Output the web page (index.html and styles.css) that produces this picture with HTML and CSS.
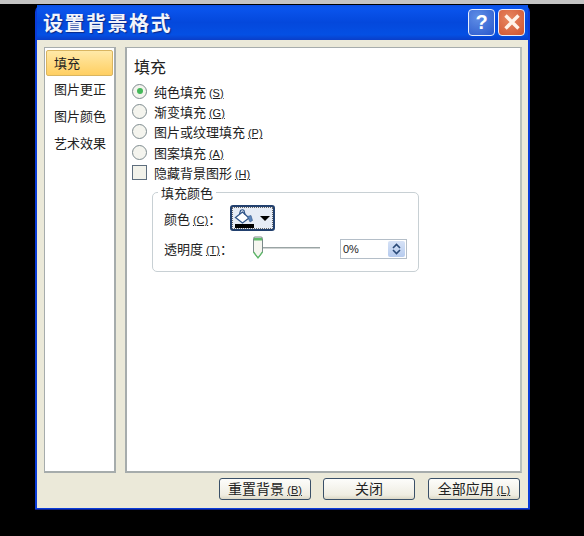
FILE: index.html
```html
<!DOCTYPE html>
<html lang="zh">
<head>
<meta charset="utf-8">
<title>设置背景格式</title>
<link rel="stylesheet" href="styles.css">
</head>
<body>
<div class="topstrip"></div>
<div class="dialog">
  <div class="titlebar">
    <span class="title">设置背景格式</span>
    <div class="winbtns">
      <span class="winbtn help">?</span>
      <span class="winbtn close">
        <svg width="20" height="20" viewBox="0 0 20 20"><path d="M3.500 3.500L16.500 16.500M16.500 3.500L3.500 16.500" stroke="#fff3ea" stroke-width="3.400" fill="none"/></svg>
      </span>
    </div>
  </div>
  <div class="client">
    <div class="panes">
      <ul class="nav">
        <li class="nav-item active">填充</li>
        <li class="nav-item">图片更正</li>
        <li class="nav-item">图片颜色</li>
        <li class="nav-item">艺术效果</li>
      </ul>
      <div class="content">
        <h1 class="heading">填充</h1>
        <div class="option"><span class="radio checked"></span><span>纯色填充 <u>(S)</u></span></div>
        <div class="option"><span class="radio"></span><span>渐变填充 <u>(G)</u></span></div>
        <div class="option"><span class="radio"></span><span>图片或纹理填充 <u>(P)</u></span></div>
        <div class="option"><span class="radio"></span><span>图案填充 <u>(A)</u></span></div>
        <div class="option"><span class="check"></span><span>隐藏背景图形 <u>(H)</u></span></div>
        <fieldset class="group">
          <legend class="legend">填充颜色</legend>
          <div class="field color-field">
            <span class="field-label">颜色 <u>(C)</u>：</span>
            <span class="colorbtn">
              <span class="swatch">
                <svg width="22" height="15" viewBox="0 0 22 15"><path d="M1.500 8.500L8.500 3L15 9L8.500 14Z" fill="#fff" stroke="#2f5488" stroke-width="1.300"/><path d="M5.500 5L6.500 1.500Q8.500 0 10 1.500L11 5.500" fill="none" stroke="#2f5488" stroke-width="1.200"/><path d="M13.500 7.500L17 6.500L18.500 11.500L16 13Z" fill="#5c86bd" stroke="#2f5488" stroke-width=".6"/></svg>
                <span class="swatch-bar"></span>
              </span>
              <span class="caret"></span>
            </span>
          </div>
          <div class="field trans-field">
            <span class="field-label">透明度 <u>(T)</u>：</span>
            <span class="slider">
              <span class="track"></span>
              <svg class="thumb" width="12" height="24" viewBox="0 0 12 24"><path d="M1.500 2.500Q1.500 1 3 1H9Q10.500 1 10.500 2.500V16L6 22L1.500 16Z" fill="#f6f6f0" stroke="#7b8a8a"/><path d="M2 2H10V4.500H2Z" fill="#5fba6a"/><path d="M1.500 16L6 22L10.500 16" fill="none" stroke="#5fba6a" stroke-width="1.300"/></svg>
            </span>
            <span class="spin">
              <span class="spin-value">0%</span>
              <span class="spin-btns">
                <svg width="13" height="16" viewBox="0 0 13 16"><path d="M3 7L6.500 3.500L10 7M3 9L6.500 12.500L10 9" fill="none" stroke="#2a4a78" stroke-width="1.600"/></svg>
              </span>
            </span>
          </div>
        </fieldset>
      </div>
    </div>
    <div class="footer">
      <button class="btn">重置背景 <u>(B)</u></button>
      <button class="btn">关闭</button>
      <button class="btn">全部应用 <u>(L)</u></button>
    </div>
  </div>
</div>
</body>
</html>
```
FILE: styles.css
```css
* { box-sizing: border-box; }
html, body { margin: 0; padding: 0; height: 536px; overflow: hidden; background: #000; }
body { font-family: "Noto Sans CJK SC", "Liberation Sans", sans-serif; font-size: 13px; color: #222; }
u { text-decoration: underline; font: 11px "Liberation Sans", sans-serif; }

.topstrip { height: 4px; background: #c4c4c4; }

.dialog {
  width: 495px; height: 505px; margin-left: 35px; margin-top: 1px;
  background: #0a3cd8; border-radius: 7px 7px 0 0;
  padding: 0 2px 2px 2px;
  display: flex; flex-direction: column;
  border-bottom: 1px solid #0a1f8c;
}
.titlebar {
  height: 35px; flex: none; display: flex; align-items: center; justify-content: space-between;
  padding: 0 0 0 6px;
  background: linear-gradient(#0a4ee0 0, #0a55ee 8%, #0448dc 50%, #0450e4 85%, #0a3ec8 100%);
}
.title { color: #f2f4fb; font-size: 20px; font-weight: 700; letter-spacing: 1.500px; line-height: 1; text-shadow: 1px 1px 1px #0a2a88; }
.winbtns { display: flex; gap: 3px; padding: 0 3px 1px 0; }
.winbtn {
  width: 27px; height: 27px; border: 1px solid #e8eefc; border-radius: 4px;
  display: flex; align-items: center; justify-content: center;
}
.help { background: radial-gradient(circle at 35% 30%, #5f8ee6, #2a58cc); color: #fff; font: bold 20px "Liberation Sans", sans-serif; }
.close { background: radial-gradient(circle at 40% 35%, #e88660, #cf5330); }

.client { flex: 1; background: #ebe9d9; display: flex; flex-direction: column; padding: 7px 6px 8px 7px; }
.panes { height: 426px; flex: none; display: flex; gap: 9px; }
.nav {
  list-style: none; margin: 0; padding: 2px 1px; width: 72px; flex: none; background: #fff;
  border: 1px solid #a6acac;
  border-right-width: 2px; border-bottom-width: 2px;
}
.nav-item { height: 27px; padding-left: 8px; line-height: 26px; white-space: nowrap; }
.active {
  height: 26px;
  background: linear-gradient(#ffe9a8, #ffcf62);
  border: 1px solid #d9b560; border-radius: 2px;
  padding-left: 7px; line-height: 23px;
}
.content {
  flex: 1; background: #fff; border: 2px solid #a6acac; border-right-color: #b8c0bc; border-top-width: 1px;
  padding: 0 0 0 7px;
}
.heading { margin: 5px 0 1px; font-size: 16px; font-weight: 400; line-height: 27px; height: 27px; color: #222; }
.option { height: 20.300px; display: flex; align-items: center; gap: 7px; white-space: nowrap; margin-left: -2px; }
.radio {
  width: 15px; height: 15px; border-radius: 50%; border: 1px solid #7f8c90; background: #f4f4ee;
  flex: none; display: flex; align-items: center; justify-content: center;
}
.checked::after { content: ""; width: 6px; height: 6px; border-radius: 50%; background: #45b85a; }
.check { width: 15px; height: 15px; border: 1px solid #5e6e7e; background: #f2f2ea; flex: none; }

.group {
  width: 267px; height: 86px; margin: 4px 0 0 18px; padding: 5px 0 0 11px;
  border: 1px solid #c8d0d4; border-radius: 5px; min-width: 0;
}
.legend { padding: 0 3px 0 3px; margin-left: -6px; line-height: 13px; font-size: 13px; }
.field { display: flex; align-items: center; white-space: nowrap; }
.color-field { height: 28px; }
.color-field .field-label { width: 66px; }
.colorbtn {
  width: 45px; height: 26px; border: 2px solid #22406e; border-radius: 3px;
  background: #e6ecf6; display: flex; align-items: center; padding-left: 2px; gap: 3px;
  outline: 1px dotted #666; outline-offset: -3px;
}
.swatch { display: flex; flex-direction: column; width: 22px; }
.swatch svg { display: block; }
.swatch-bar { height: 4px; background: #000; width: 19px; margin-left: 1px; }
.caret { width: 0; height: 0; border-left: 5px solid transparent; border-right: 5px solid transparent; border-top: 5px solid #000; margin-left: 1px; }
.trans-field { height: 32px; }
.trans-field .field-label { width: 86px; }
.slider { width: 70px; height: 26px; position: relative; display: block; flex: none; margin-right: 20px; }
.track { position: absolute; left: 8px; right: 0; top: 12px; background: #9aa4a4; border-bottom: 1px solid #d0d4d4; height: 2px; }
.thumb { position: absolute; left: 2px; top: 1px; }
.spin { width: 67px; height: 20px; margin-top: 2px; border: 1px solid #b4bec8; background: #fff; display: flex; align-items: center; justify-content: space-between; padding: 0 1px 0 2px; font-size: 11px; }
.spin-value { font-family: "Liberation Sans", sans-serif; }
.spin-btns { width: 17px; height: 16px; background: linear-gradient(#d6e2f6, #b6cbee); display: flex; align-items: center; justify-content: center; border-radius: 2px; }

.footer { display: flex; justify-content: flex-end; gap: 12px; padding: 5px 2px 0 0; }
.footer .btn:last-child { margin-left: 1px; }
.btn {
  width: 92px; height: 22px; padding: 0 0 2px; border: 1px solid #3a5068; border-radius: 3px;
  background: linear-gradient(#fdfdfb, #efede2 80%, #dcd8c6);
  font: 14px "Noto Sans CJK SC", sans-serif; color: #222; line-height: 18px;
  white-space: nowrap;
}
```
